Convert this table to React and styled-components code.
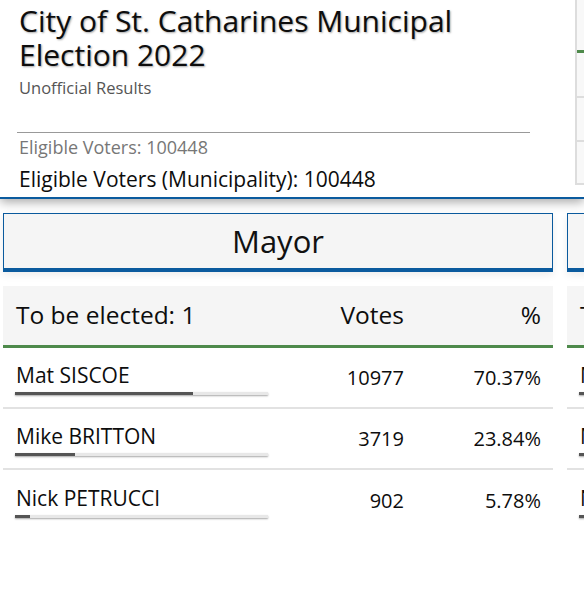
import React from 'react';
import styled, { createGlobalStyle } from 'styled-components';

const GlobalStyle = createGlobalStyle`
  html, body {
    margin: 0;
    padding: 0;
    background: #fff;
    overflow: hidden;
  }
  body {
    font-family: "Open Sans", "Noto Sans", sans-serif;
    color: #111;
  }
`;

const Page = styled.div`
  width: 584px;
  height: 589px;
  overflow: hidden;
  position: relative;
`;

const Header = styled.header`
  display: flex;
  height: 197px;
  border-bottom: 2px solid #0b5b9e;
  box-shadow: 0 3px 10px rgba(0, 0, 0, 0.35);
  position: relative;
  z-index: 1;
  background: #fff;
`;

const HeaderMain = styled.div`
  width: 513px;
  margin-left: 17px;
  flex-shrink: 0;
  padding-top: 4px;
`;

const Title = styled.h1`
  margin: 0 0 0 2px;
  font-size: 30px;
  font-weight: 400;
  line-height: 34px;
  color: #0d0d0d;
  text-shadow: 1px 1px 2px rgba(0, 0, 0, 0.35);
`;

const Subtitle = styled.div`
  margin: 5px 0 0 2px;
  font-size: 16.5px;
  line-height: 22px;
  color: #555;
`;

const Rule = styled.hr`
  margin: 33px 0 0;
  border: 0;
  border-top: 1px solid #999;
`;

const Eligible = styled.div`
  margin: ${p => (p.$main ? '1px 0 0 2px' : '0 0 0 2px')};
  font-size: ${p => (p.$main ? '21px' : '18px')};
  color: ${p => (p.$main ? '#0d0d0d' : '#777')};
  line-height: ${p => (p.$main ? '32px' : '29px')};
`;

const SidePanel = styled.div`
  margin-left: 45px;
  width: 200px;
  height: 185px;
  flex-shrink: 0;
  background: #f8f8f8;
  border-left: 2px solid #ddd;
  border-bottom: 2px solid #ddd;
  box-sizing: border-box;
  display: flex;
  flex-direction: column;
`;

const SideBlock = styled.div`
  height: ${p => p.$h}px;
  border-bottom: ${p => p.$line};
`;

const Columns = styled.div`
  display: flex;
  gap: 14px;
  padding: 14px 0 0 3px;
`;

const Race = styled.section`
  width: 550px;
  flex-shrink: 0;
`;

const RaceTitle = styled.div`
  height: 54px;
  background: #f5f5f5;
  border: 1px solid #0b5b9e;
  border-bottom: 4px solid #0b5b9e;
  box-shadow: 0 3px 8px rgba(0, 0, 0, 0.08);
  display: flex;
  align-items: center;
  justify-content: center;
  font-size: 31px;
  color: #111;
`;

const Row = styled.div`
  display: grid;
  grid-template-columns: 1fr 120px 137px;
  align-items: center;
  padding: 0 12px 0 13px;
`;

const HeadRow = styled(Row)`
  margin-top: 14px;
  height: 59px;
  padding-bottom: 3px;
  box-sizing: border-box;
  height: 62px;
  background: #f5f5f5;
  border-bottom: 3px solid #4e8a4b;
  font-size: 24.5px;
  font-weight: 500;
  color: #0d0d0d;
`;

const Cell = styled.div`
  text-align: ${p => (p.$right ? 'right' : 'left')};
`;

const CandRow = styled(Row)`
  height: 61px;
  border-bottom: ${p => (p.$last ? 'none' : '2px solid #e2e2e2')};
  font-size: 20px;
  color: #0d0d0d;
  box-sizing: border-box;
`;

const Name = styled.div`
  display: flex;
  flex-direction: column;
  padding-top: 2px;
  font-size: 21px;
  line-height: 26px;
`;

const Bar = styled.div`
  margin: 4px 0 0 -1px;
  width: 253px;
  height: 3px;
  background: #e8e8e8;
  box-shadow: 0 1px 2px rgba(0, 0, 0, 0.35);
`;

const Fill = styled.div`
  height: 100%;
  background: #555;
`;

const candidates = [
  { name: 'Mat SISCOE', votes: 10977, pct: 70.37 },
  { name: 'Mike BRITTON', votes: 3719, pct: 23.84 },
  { name: 'Nick PETRUCCI', votes: 902, pct: 5.78 },
];

const RaceColumn = ({ title }) => (
  <Race>
    <RaceTitle>{title}</RaceTitle>
    <HeadRow>
      <Cell>To be elected: 1</Cell>
      <Cell $right>Votes</Cell>
      <Cell $right>%</Cell>
    </HeadRow>
    {candidates.map((c, i) => (
      <CandRow key={c.name} $last={i === candidates.length - 1}>
        <Name>
          <span>{c.name}</span>
          <Bar>
            <Fill style={{ width: `${c.pct}%` }} />
          </Bar>
        </Name>
        <Cell $right>{c.votes}</Cell>
        <Cell $right>{c.pct.toFixed(2)}%</Cell>
      </CandRow>
    ))}
  </Race>
);

export default function App() {
  return (
    <Page>
      <GlobalStyle />
      <Header>
        <HeaderMain>
          <Title>City of St. Catharines Municipal Election 2022</Title>
          <Subtitle>Unofficial Results</Subtitle>
          <Rule />
          <Eligible>Eligible Voters: 100448</Eligible>
          <Eligible $main>Eligible Voters (Municipality): 100448</Eligible>
        </HeaderMain>
        <SidePanel>
          <SideBlock $h={50} $line="3px solid #4e8a4b" />
          <SideBlock $h={43} $line="2px solid #ddd" />
          <SideBlock $h={42} $line="2px solid #ddd" />
        </SidePanel>
      </Header>
      <Columns>
        <RaceColumn title="Mayor" />
        <RaceColumn title="Regional Councillor" />
      </Columns>
    </Page>
  );
}
